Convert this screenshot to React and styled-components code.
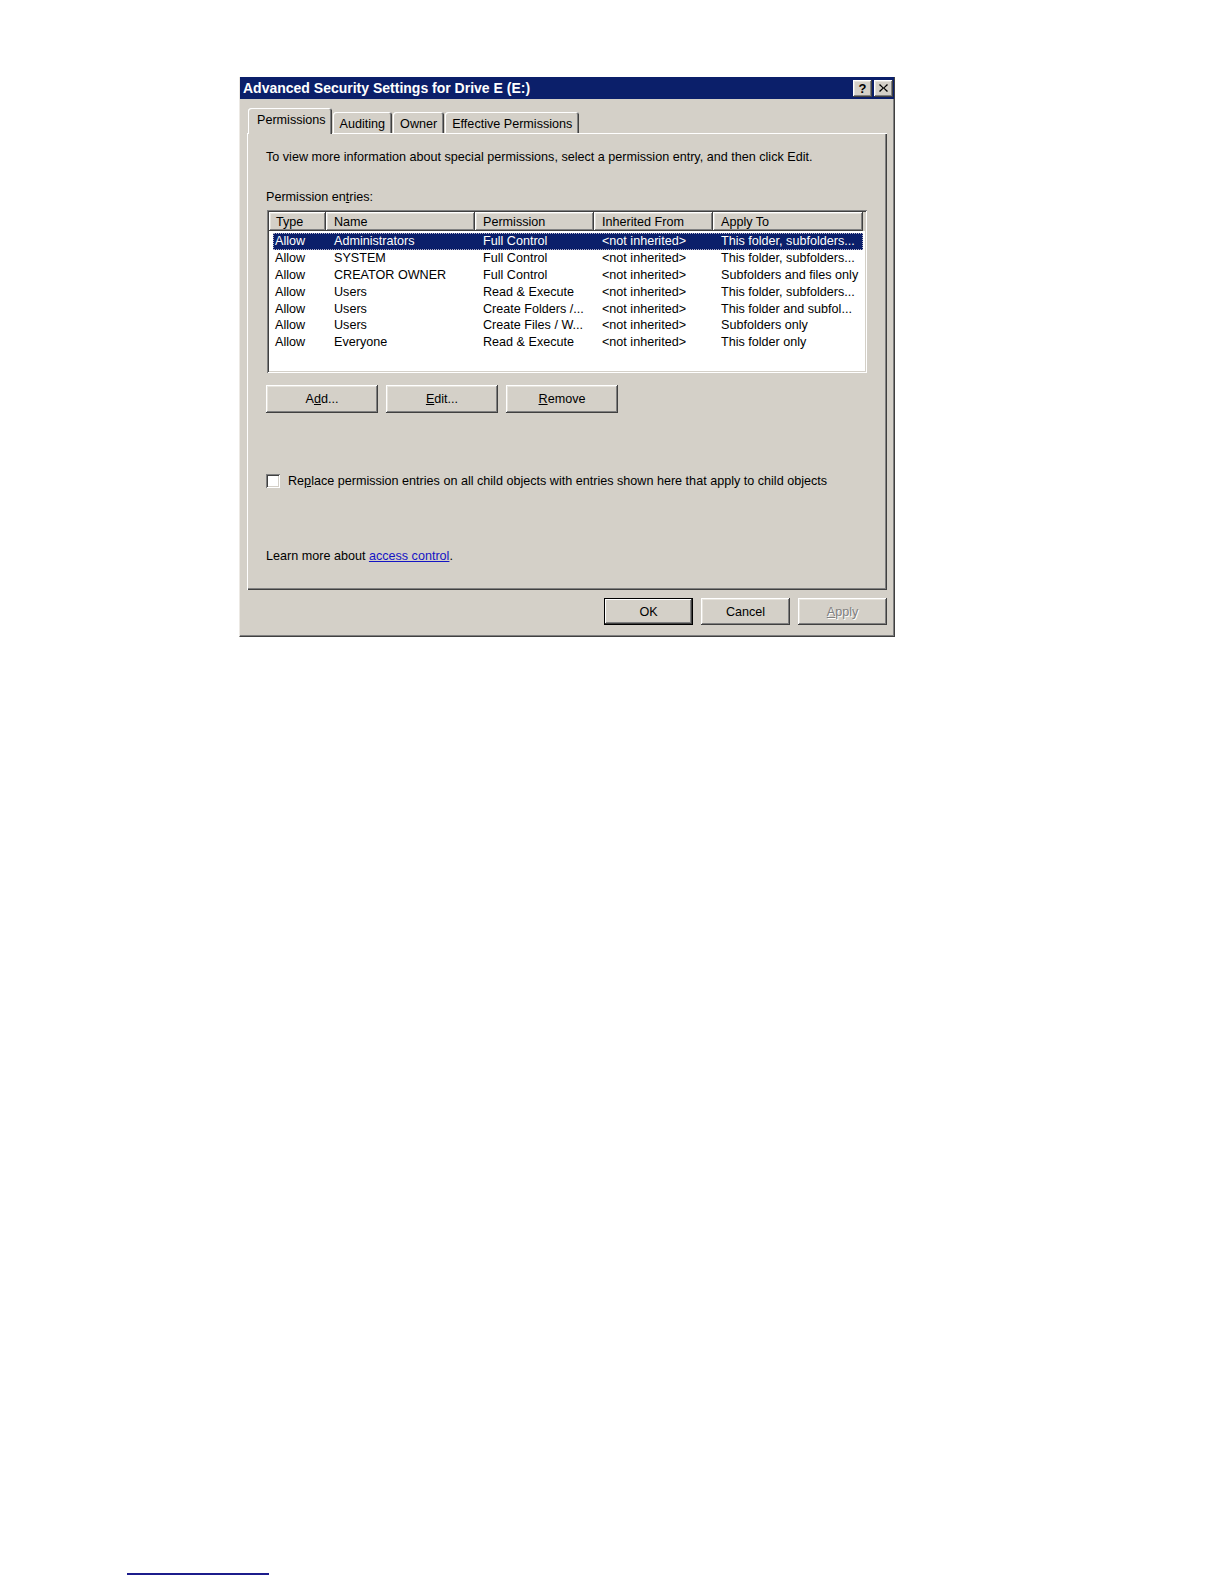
import React from "react";
import styled, { createGlobalStyle } from "styled-components";

const GlobalStyle = createGlobalStyle`
  body {
    margin: 0;
    background: #ffffff;
    font-family: "Liberation Sans", Arial, sans-serif;
    color: #000;
  }
`;

const raised = `
  box-shadow: inset -1px -1px #404040, inset 1px 1px #ffffff,
    inset -2px -2px #808080, inset 2px 2px #e6e3dc;
`;

const sunken = `
  box-shadow: inset 1px 1px #808080, inset -1px -1px #ffffff,
    inset 2px 2px #404040, inset -2px -2px #d4d0c8;
`;

const headerCols = "57px 149px 119px 119px 150px";
const rowCols = "53px 149px 119px 119px 150px";

const entries = [
  ["Allow", "Administrators", "Full Control", "<not inherited>", "This folder, subfolders..."],
  ["Allow", "SYSTEM", "Full Control", "<not inherited>", "This folder, subfolders..."],
  ["Allow", "CREATOR OWNER", "Full Control", "<not inherited>", "Subfolders and files only"],
  ["Allow", "Users", "Read & Execute", "<not inherited>", "This folder, subfolders..."],
  ["Allow", "Users", "Create Folders /...", "<not inherited>", "This folder and subfol..."],
  ["Allow", "Users", "Create Files / W...", "<not inherited>", "Subfolders only"],
  ["Allow", "Everyone", "Read & Execute", "<not inherited>", "This folder only"],
];

export default function App() {
  return (
    <Page>
      <GlobalStyle />
      <DialogArea>
        <Window>
          <TitleBar>
            <TitleText>Advanced Security Settings for Drive E (E:)</TitleText>
            <CaptionButtons>
              <CaptionButton>?</CaptionButton>
              <CaptionButton>
                <svg width="9" height="8" viewBox="0 0 9 8">
                  <path d="M1 0 L4.5 3.4 L8 0 L9 1 L5.5 4 L9 7 L8 8 L4.5 4.6 L1 8 L0 7 L3.5 4 L0 1 Z" fill="#000" />
                </svg>
              </CaptionButton>
            </CaptionButtons>
          </TitleBar>

          <Tabs>
            <Tab $active>Permissions</Tab>
            <Tab>Auditing</Tab>
            <Tab>Owner</Tab>
            <Tab>Effective Permissions</Tab>
          </Tabs>

          <Panel>
            <Text>
              To view more information about special permissions, select a
              permission entry, and then click Edit.
            </Text>
            <Label>
              Permission en<U>t</U>ries:
            </Label>

            <ListBox>
              <Header>
                <HeaderCell>Type</HeaderCell>
                <HeaderCell>Name</HeaderCell>
                <HeaderCell>Permission</HeaderCell>
                <HeaderCell>Inherited From</HeaderCell>
                <HeaderCell>Apply To</HeaderCell>
              </Header>
              <Rows>
                {entries.map((row, i) => (
                  <Row key={i} $selected={i === 0}>
                    {row.map((cell, j) => (
                      <Cell key={j} $first={j === 0}>
                        {cell}
                      </Cell>
                    ))}
                  </Row>
                ))}
              </Rows>
            </ListBox>

            <ButtonRow>
              <Button $w={112} $h={28}>
                A<U>d</U>d...
              </Button>
              <Button $w={112} $h={28}>
                <U>E</U>dit...
              </Button>
              <Button $w={112} $h={28}>
                <U>R</U>emove
              </Button>
            </ButtonRow>

            <CheckRow>
              <CheckBox />
              <span>
                Re<U>p</U>lace permission entries on all child objects with
                entries shown here that apply to child objects
              </span>
            </CheckRow>

            <LearnMore>
              Learn more about <Link>access control</Link>.
            </LearnMore>
          </Panel>

          <Footer>
            <Button $w={89} $h={27} $default>
              OK
            </Button>
            <Button $w={89} $h={27}>
              Cancel
            </Button>
            <Button $w={89} $h={27} $disabled>
              <U>A</U>pply
            </Button>
          </Footer>
        </Window>
      </DialogArea>
      <FootRule />
    </Page>
  );
}

const Page = styled.div`
  display: flex;
  flex-direction: column;
  min-height: 1584px;
  font-size: 12.6px;
`;

const DialogArea = styled.div`
  padding: 77px 0 0 239px;
`;

const Window = styled.div`
  box-sizing: border-box;
  width: 656px;
  height: 560px;
  display: flex;
  flex-direction: column;
  background: #d4d0c8;
  border-left: 1px solid #ece9e4;
  border-right: 1px solid #404040;
  border-bottom: 1px solid #404040;
  box-shadow: inset -1px -1px #808080;
`;

const TitleBar = styled.div`
  height: 22px;
  display: flex;
  align-items: center;
  justify-content: space-between;
  padding: 0 1px 0 3px;
  background: #0b1f6a;
  color: #fff;
`;

const TitleText = styled.span`
  font-weight: bold;
  font-size: 14px;
  white-space: nowrap;
`;

const CaptionButtons = styled.div`
  display: flex;
  gap: 2px;
`;

const CaptionButton = styled.div`
  width: 19px;
  height: 17px;
  display: flex;
  align-items: center;
  justify-content: center;
  background: #d4d0c8;
  color: #000;
  font-weight: bold;
  font-size: 13px;
  ${raised}
`;

const Tabs = styled.div`
  height: 25px;
  margin: 9px 7px 0 7px;
  padding-left: 1px;
  display: flex;
  align-items: flex-end;
  gap: 1px;
`;

const Tab = styled.div`
  position: relative;
  z-index: 1;
  box-sizing: border-box;
  height: ${(p) => (p.$active ? "26px" : "21px")};
  margin-bottom: ${(p) => (p.$active ? "-1px" : "0")};
  padding: ${(p) => (p.$active ? "5px 6px 0 9px" : "2px 7px 0 7px")};
  display: flex;
  align-items: ${(p) => (p.$active ? "flex-start" : "center")};
  white-space: nowrap;
  background: #d4d0c8;
  border-radius: 3px 3px 0 0;
  box-shadow: inset 1px 1px #ffffff, inset -1px 0 #404040,
    inset -2px 0 #808080;
`;

const Panel = styled.div`
  box-sizing: border-box;
  height: 457px;
  margin: 0 7px;
  padding: 16px 19px 0 19px;
  display: flex;
  flex-direction: column;
  background: #d4d0c8;
  box-shadow: inset 1px 1px #ffffff, inset -1px -1px #404040,
    inset -2px -2px #808080;
`;

const Text = styled.div`
  line-height: 16px;
  white-space: nowrap;
`;

const Label = styled(Text)`
  margin-top: 24px;
`;

const U = styled.span`
  text-decoration: underline;
`;

const ListBox = styled.div`
  box-sizing: border-box;
  width: 600px;
  height: 163px;
  margin: 5px 0 0 1px;
  padding: 2px;
  background: #ffffff;
  ${sunken}
`;

const Header = styled.div`
  display: grid;
  grid-template-columns: ${headerCols};
  height: 19px;
  background: #d4d0c8;
`;

const HeaderCell = styled.div`
  display: flex;
  align-items: center;
  padding-left: 8px;
  white-space: nowrap;
  overflow: hidden;
  &:first-child {
    padding-left: 7px;
  }
  ${raised}
`;

const Rows = styled.div`
  margin-top: 2px;
  padding-left: 4px;
`;

const Row = styled.div`
  display: grid;
  grid-template-columns: ${rowCols};
  width: 590px;
  height: 16.8px;
  align-items: center;
  background: ${(p) => (p.$selected ? "#0b1f6a" : "transparent")};
  color: ${(p) => (p.$selected ? "#ffffff" : "#000000")};
  outline: ${(p) => (p.$selected ? "1px dotted #b8b4c8" : "none")};
  outline-offset: -1px;
`;

const Cell = styled.div`
  padding-left: ${(p) => (p.$first ? "2px" : "8px")};
  white-space: nowrap;
  overflow: hidden;
`;

const ButtonRow = styled.div`
  display: flex;
  gap: 8px;
  margin-top: 12px;
`;

const Button = styled.div`
  box-sizing: border-box;
  width: ${(p) => p.$w}px;
  height: ${(p) => p.$h}px;
  display: flex;
  align-items: center;
  justify-content: center;
  background: #d4d0c8;
  color: ${(p) => (p.$disabled ? "#808080" : "#000")};
  text-shadow: ${(p) => (p.$disabled ? "1px 1px 0 #ffffff" : "none")};
  box-shadow: ${(p) =>
    p.$default
      ? "inset 0 0 0 1px #000, inset -2px -2px #404040, inset 2px 2px #fff, inset -3px -3px #808080"
      : "inset -1px -1px #404040, inset 1px 1px #ffffff, inset -2px -2px #808080, inset 2px 2px #e6e3dc"};
`;

const CheckRow = styled.div`
  display: flex;
  align-items: center;
  gap: 8px;
  margin-top: 61px;
  height: 14px;
  white-space: nowrap;
`;

const CheckBox = styled.div`
  width: 14px;
  height: 14px;
  flex: none;
  background: #ffffff;
  ${sunken}
`;

const LearnMore = styled(Text)`
  margin-top: 60px;
`;

const Link = styled.span`
  color: #1414c4;
  text-decoration: underline;
`;

const Footer = styled.div`
  display: flex;
  justify-content: flex-end;
  gap: 8px;
  margin: 8px 7px 0 0;
`;

const FootRule = styled.div`
  width: 142px;
  height: 2px;
  margin: 936px 0 0 127px;
  background: #1c1c8c;
`;
